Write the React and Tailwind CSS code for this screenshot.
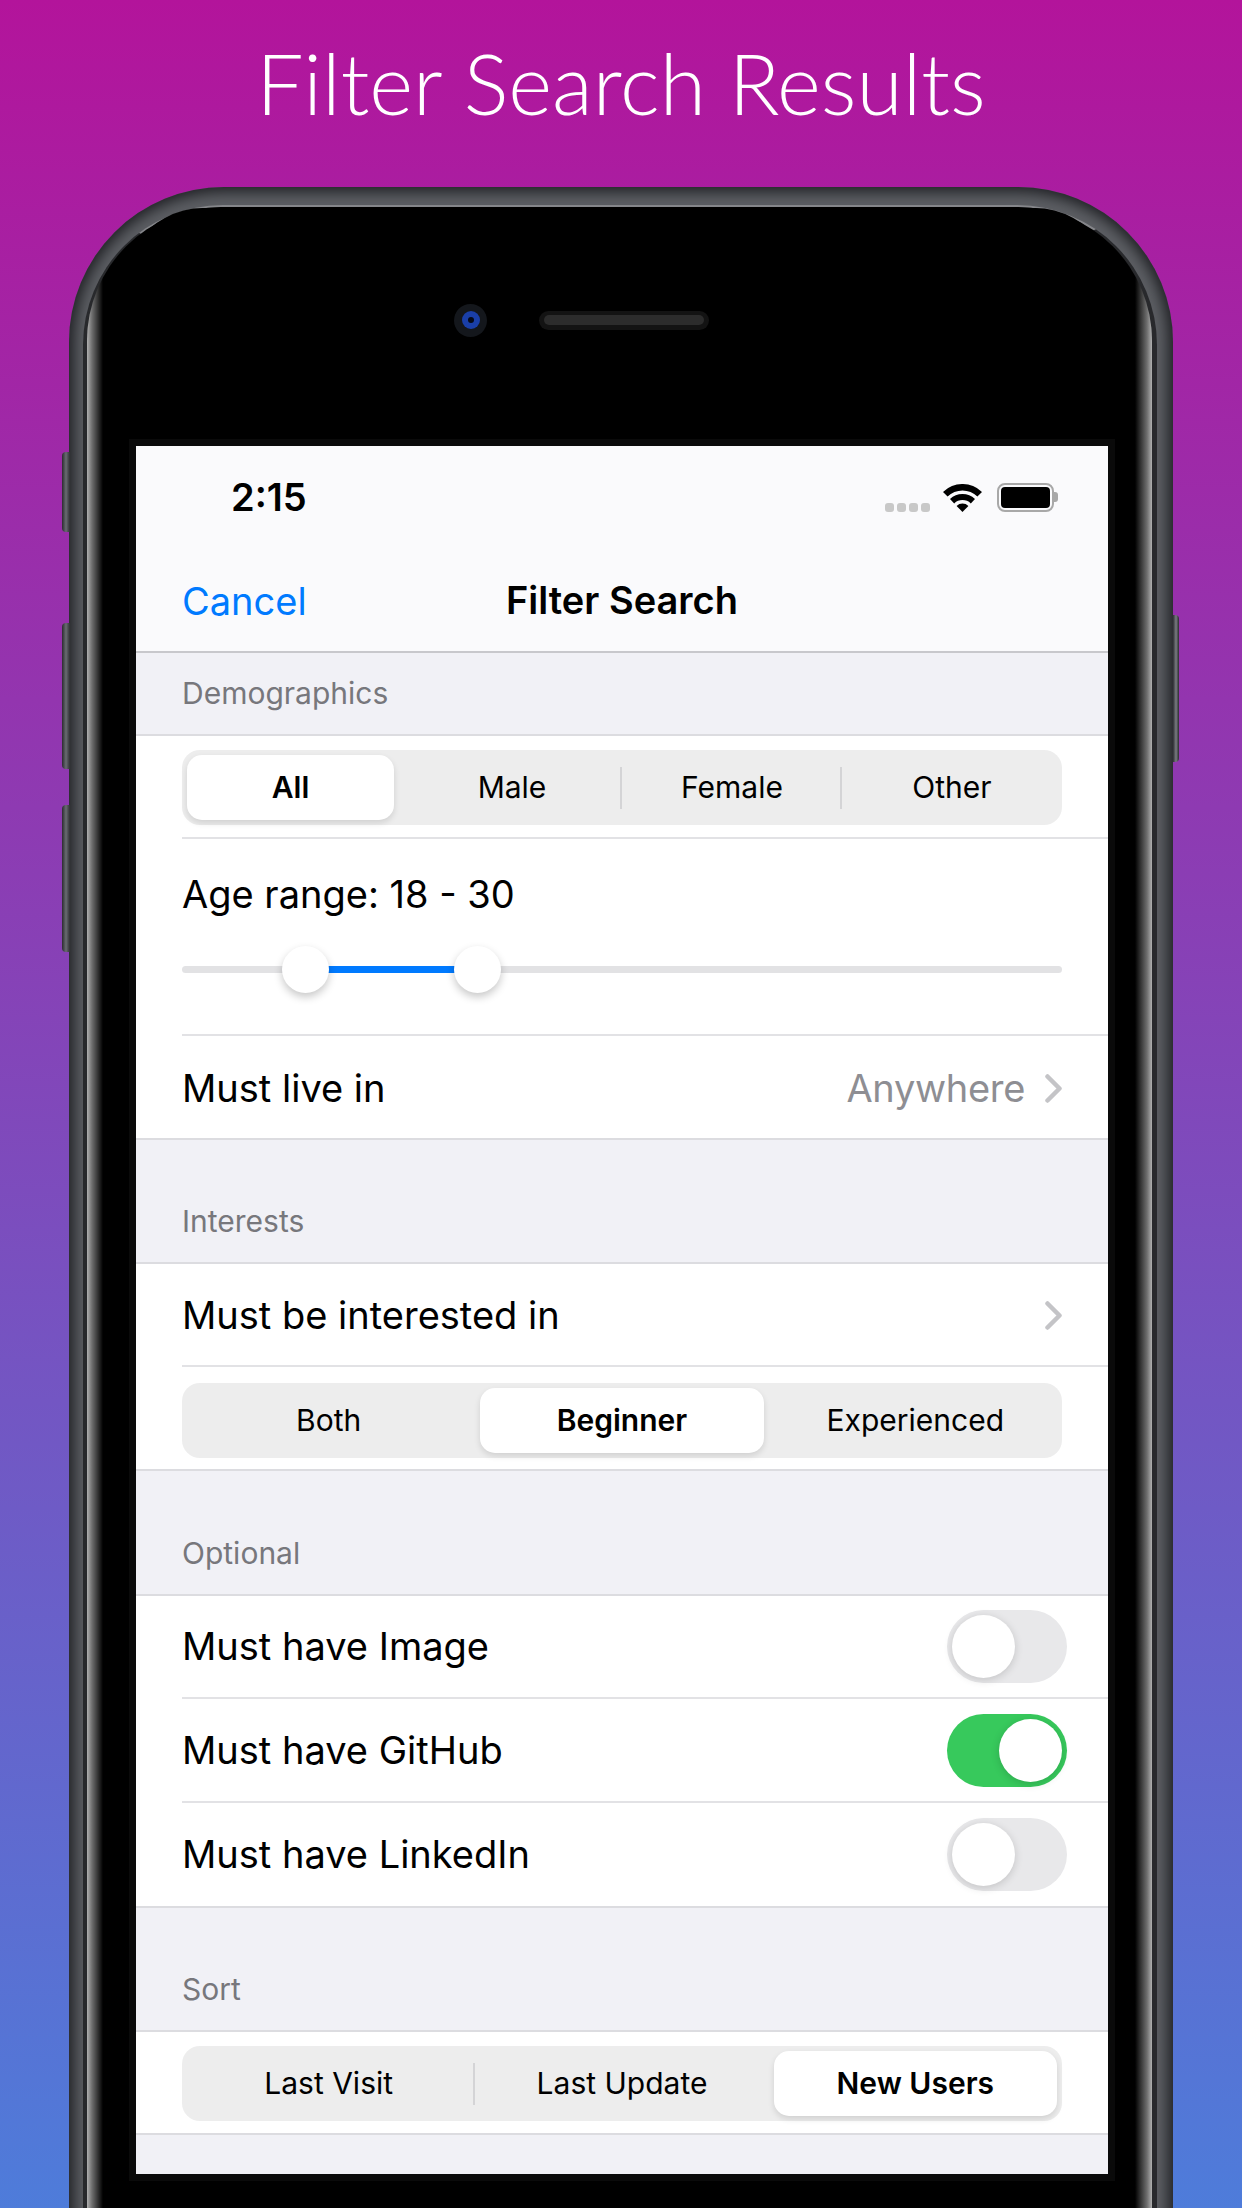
const Chevron = () => (
  <svg width="17" height="29" viewBox="0 0 17 29" className="shrink-0">
    <polyline points="2.5,2.5 14.5,14.5 2.5,26.5" fill="none" stroke="#c4c4c7" strokeWidth="4.5" strokeLinecap="round" strokeLinejoin="round" />
  </svg>
);

const SectionLabel = ({ text, height }) => (
  <div className={`flex items-end bg-[#f1f1f6] border-b-2 border-[#dcdce0] pl-[46px] text-[#77777c] text-[30px] ${height}`}>
    <span className="leading-[34px] mb-[24px]">{text}</span>
  </div>
);

const Divider = () => <div className="ml-[46px] h-[2px] bg-[#e2e2e5]" />;

const Segmented = ({ items, selected, dividers }) => (
  <div className="flex items-center h-[75px] rounded-[18px] bg-[#ededed]">
    {items.map((item, i) => (
      <div key={item} className="relative flex-1 h-full">
        {i === selected ? (
          <div className={`flex items-center justify-center h-[65px] m-[5px] rounded-[15px] bg-white font-semibold text-black text-[30px] shadow-[0_3px_6px_rgba(0,0,0,0.12)] ${i === 0 ? "mr-[8px]" : ""}`}>
            {item}
          </div>
        ) : (
          <div className="flex items-center justify-center h-full text-black text-[30px]">{item}</div>
        )}
        {dividers.includes(i) && (
          <div className="absolute right-0 top-[17px] w-[2px] h-[42px] bg-[#d4d4d6]" />
        )}
      </div>
    ))}
  </div>
);

const Toggle = ({ on }) => (
  <div
    className={
      on
        ? "flex justify-end items-center w-[120px] h-[73px] rounded-full bg-[#37c95c] p-[5px]"
        : "flex items-center w-[120px] h-[73px] rounded-full bg-[#e8e8ea] p-[5px]"
    }
  >
    <div className="w-[63px] h-[63px] rounded-full bg-white shadow-[0_2px_8px_rgba(0,0,0,0.16)]" />
  </div>
);

const ToggleRow = ({ label, on, height }) => (
  <div className={`flex items-center justify-between pl-[46px] pr-[41px] text-[38px] text-black ${height}`}>
    <span>{label}</span>
    <Toggle on={on} />
  </div>
);

const Screen = () => (
  <div className="w-[972px] h-[1728px] bg-[#f1f1f6] font-['Inter',sans-serif] overflow-hidden">
    {/* Status and nav bar */}
    <div className="h-[207px] bg-[#fafafc] border-b-2 border-[#c8c8cc]">
      <div className="flex items-center justify-between h-[102px] pl-[95px] pr-[50px]">
        <span className="text-[38px] font-semibold text-black leading-none">2:15</span>
        <div className="flex items-center">
          <div className="flex gap-[3px] mt-[20px] mr-[13px]">
            <div className="w-[9px] h-[9px] rounded-[3px] bg-[#c8c8c8]" />
            <div className="w-[9px] h-[9px] rounded-[3px] bg-[#c8c8c8]" />
            <div className="w-[9px] h-[9px] rounded-[3px] bg-[#c8c8c8]" />
            <div className="w-[9px] h-[9px] rounded-[3px] bg-[#c8c8c8]" />
          </div>
          <svg width="39" height="28" viewBox="0 0 39 28" className="mr-[15px] mt-[1px]">
            <path d="M0 7.9A28 28 0 0 1 39 7.9L34.4 12.5A21.5 21.5 0 0 0 4.6 12.5Z" fill="#000" />
            <path d="M7 15.05A18 18 0 0 1 32 15.05L27.8 19.4A12 12 0 0 0 11.2 19.4Z" fill="#000" />
            <path d="M13.6 21.9A8.5 8.5 0 0 1 25.4 21.9L19.5 28Z" fill="#000" />
          </svg>
          <div className="flex items-center">
            <div className="w-[57px] h-[29px] rounded-[8px] border-[2.5px] border-[#a8a8a8] p-[2px]">
              <div className="w-full h-full rounded-[4px] bg-black" />
            </div>
            <div className="w-[4px] h-[10px] rounded-r-[3px] bg-[#a8a8a8]" />
          </div>
        </div>
      </div>
      <div className="relative flex items-center justify-center h-[103px]">
        <span className="absolute left-[46px] top-[30px] text-[38px] leading-[46px] text-[#007aff]">Cancel</span>
        <span className="text-[38px] font-semibold text-black mt-[2px]">Filter Search</span>
      </div>
    </div>

    <SectionLabel text="Demographics" height="h-[83px]" />
    <div className="bg-white border-b-2 border-[#dcdce0]">
      <div className="h-[101px] pt-[14px] px-[46px]">
        <Segmented items={["All", "Male", "Female", "Other"]} selected={0} dividers={[1, 2]} />
      </div>
      <Divider />
      <div className="h-[195px] px-[46px] pt-[30px]">
        <div className="text-[38px] leading-[50px] text-black">Age range: 18 - 30</div>
        <div className="relative h-[7px] mt-[47px] rounded-full bg-[#e2e2e4]">
          <div className="absolute left-[123px] w-[173px] h-[7px] bg-[#007aff]" />
          <div className="absolute left-[100px] top-[-20px] w-[47px] h-[47px] rounded-full bg-white shadow-[0_4px_8px_rgba(0,0,0,0.22)]" />
          <div className="absolute left-[272px] top-[-20px] w-[47px] h-[47px] rounded-full bg-white shadow-[0_4px_8px_rgba(0,0,0,0.22)]" />
        </div>
      </div>
      <Divider />
      <div className="flex items-center justify-between h-[102px] px-[46px] pt-[2px] text-[38px]">
        <span className="text-black">Must live in</span>
        <div className="flex items-center gap-[20px]">
          <span className="text-[#8e8e93] tracking-[-0.3px]">Anywhere</span>
          <Chevron />
        </div>
      </div>
    </div>

    <SectionLabel text="Interests" height="h-[124px]" />
    <div className="bg-white border-b-2 border-[#dcdce0]">
      <div className="flex items-center justify-between h-[101px] px-[46px] pt-[2px] text-[38px] text-black">
        <span>Must be interested in</span>
        <Chevron />
      </div>
      <Divider />
      <div className="h-[102px] pt-[16px] px-[46px]">
        <Segmented items={["Both", "Beginner", "Experienced"]} selected={1} dividers={[]} />
      </div>
    </div>

    <SectionLabel text="Optional" height="h-[125px]" />
    <div className="bg-white border-b-2 border-[#dcdce0]">
      <ToggleRow label="Must have Image" on={false} height="h-[101px]" />
      <Divider />
      <ToggleRow label="Must have GitHub" on height="h-[102px]" />
      <Divider />
      <ToggleRow label="Must have LinkedIn" on={false} height="h-[103px]" />
    </div>

    <SectionLabel text="Sort" height="h-[124px]" />
    <div className="h-[103px] bg-white border-b-2 border-[#dcdce0] pt-[14px] px-[46px]">
      <Segmented items={["Last Visit", "Last Update", "New Users"]} selected={2} dividers={[0]} />
    </div>
  </div>
);

const SideButton = ({ height, className }) => (
  <div className={`w-[8px] rounded-l-[4px] bg-gradient-to-r from-[#2b2c30] via-[#6a6c72] to-[#2f3034] ${height} ${className}`} />
);

const Phone = () => (
  <div className="relative ml-[69px] w-[1104px] h-[2100px]">
    {/* Side buttons */}
    <div className="absolute left-[-7px] top-[265px] flex flex-col">
      <SideButton height="h-[80px]" className="" />
      <SideButton height="h-[146px]" className="mt-[91px]" />
      <SideButton height="h-[147px]" className="mt-[36px]" />
    </div>
    <div className="absolute right-[-6px] top-[428px] w-[6px] h-[147px] rounded-r-[4px] bg-gradient-to-r from-[#2f3034] via-[#7b7d83] to-[#2b2c30]" />

    {/* Body rings */}
    <div className="h-full rounded-t-[155px] bg-[#5c5e63] pt-[18px] pl-[14px] pr-[16px] shadow-[inset_0_0_14px_5px_#1f2024]">
      <div className="h-full rounded-t-[140px] border-l-[4px] border-r-[5px] border-t-[2px] border-x-[#28292c] border-t-[#85868a]">
        <div className="h-full rounded-t-[134px] pt-[1px] pl-[16px] pr-[17px] bg-[linear-gradient(to_right,#b0b0b0_0px,#6e6e6e_5px,#000_16px,#000_calc(100%-17px),#6e6e6e_calc(100%-5px),#b0b0b0_100%)]">
          <div className="h-full rounded-tl-[100px_130px] rounded-tr-[100px_130px] bg-black pl-[33px] pr-[27px]">
            {/* Camera and speaker */}
            <div className="flex items-center h-[238px] pb-[14px] pl-[318px]">
              <div className="flex items-center justify-center w-[33px] h-[33px] rounded-full bg-[#14171c]">
                <div className="flex items-center justify-center w-[18px] h-[18px] rounded-full bg-[#1a3fa8]">
                  <div className="w-[6px] h-[6px] rounded-full bg-[#060a18]" />
                </div>
              </div>
              <div className="ml-[52px] flex items-center w-[170px] h-[19px] rounded-full bg-[#131313] px-[5px]">
                <div className="w-full h-[10px] rounded-full bg-[#2c2c2c]" />
              </div>
            </div>
            <div className="w-[972px] outline-[7px] outline-solid outline-[#0a0a0a]">
              <Screen />
            </div>
          </div>
        </div>
      </div>
    </div>
  </div>
);

export default function App() {
  return (
    <div className="w-[1242px] h-[2208px] overflow-hidden bg-[linear-gradient(to_bottom,#b3149b,#4e7cda)]">
      <div className="h-[187px] pt-[33px] text-center text-white font-['Lato',sans-serif] font-light text-[84px] leading-[100px]">
        Filter Search Results
      </div>
      <Phone />
    </div>
  );
}
